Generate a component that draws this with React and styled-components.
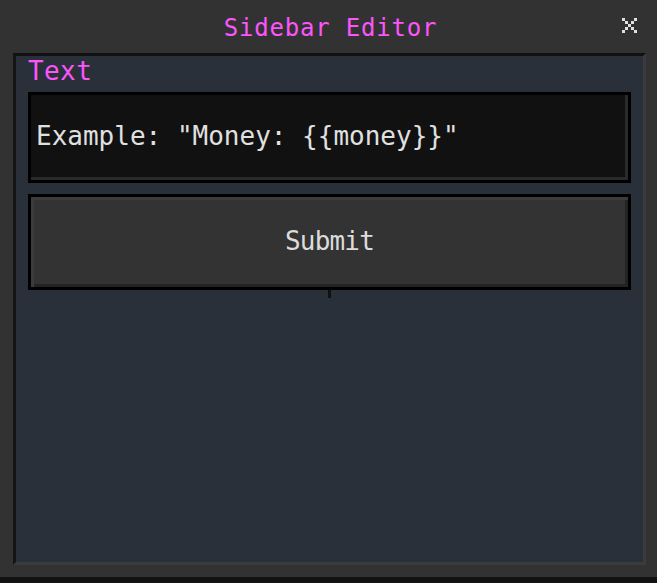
import React from 'react'
import styled, { createGlobalStyle } from 'styled-components'

const GlobalStyle = createGlobalStyle`
  html, body {
    margin: 0;
    padding: 0;
    background: #323232;
  }
`;

const Window = styled.div`
  width: 657px;
  height: 583px;
  display: flex;
  flex-direction: column;
  background: #323232;
  font-family: "DejaVu Sans Mono", "Liberation Mono", monospace;
  box-sizing: border-box;
  overflow: hidden;
`;

const TitleBar = styled.div`
  position: relative;
  height: 53px;
  display: flex;
  align-items: center;
  justify-content: center;
  flex-shrink: 0;
`;

const Title = styled.span`
  color: #fb55fb;
  font-size: 24px;
  letter-spacing: 0.8px;
  padding-left: 4px;
  margin-top: 2px;
`;

const CloseButton = styled.button`
  position: absolute;
  right: 18px;
  top: 15px;
  width: 20px;
  height: 20px;
  padding: 0;
  border: none;
  background: transparent;
  display: flex;
  align-items: center;
  justify-content: center;
  cursor: pointer;
`;

const Panel = styled.div`
  margin: 0 11px 0 13px;
  height: 512px;
  box-sizing: border-box;
  background: #29303a;
  border-top: 3px solid #111111;
  border-left: 3px solid #141414;
  border-right: 3px solid #3b3b3b;
  border-bottom: 3px solid #3b3b3b;
  padding: 0 12px;
  display: flex;
  flex-direction: column;
`;

const Label = styled.label`
  color: #fb55fb;
  font-size: 26px;
  line-height: 31px;
  height: 36px;
  letter-spacing: 0.4px;
`;

const TextInput = styled.input`
  height: 91px;
  box-sizing: border-box;
  border: 3px solid #000;
  background: #111111;
  box-shadow: inset -3px -3px 0 #2a2a2a;
  color: #e0e0e0;
  font-family: inherit;
  font-size: 26px;
  padding: 0 0 4px 5px;
  outline: none;
  &::placeholder {
    color: #e0e0e0;
    opacity: 1;
  }
`;

const SubmitButton = styled.button`
  margin-top: 11px;
  height: 96px;
  box-sizing: border-box;
  border: 3px solid #000;
  background: #333333;
  box-shadow: inset 3px 3px 0 #3c3c3c, inset -3px -3px 0 #232323;
  color: #dcdcdc;
  font-family: inherit;
  font-size: 26px;
  letter-spacing: -0.8px;
  padding: 0 0 2px 0;
  cursor: pointer;
`;

const Tick = styled.div`
  align-self: center;
  width: 3px;
  height: 8px;
  background: #111;
  margin-left: -1px;
`;

const BottomStrip = styled.div`
  margin-top: auto;
  height: 6px;
  background: #121212;
`;

const CloseIcon = () => (
  <svg width="15" height="15" viewBox="0 0 15 15" shapeRendering="crispEdges">
    <g fill="#e0e0e0">
      <rect x="0" y="0" width="3" height="3" />
      <rect x="12" y="0" width="3" height="3" />
      <rect x="3" y="3" width="3" height="3" />
      <rect x="9" y="3" width="3" height="3" />
      <rect x="6" y="6" width="3" height="3" />
      <rect x="3" y="9" width="3" height="3" />
      <rect x="9" y="9" width="3" height="3" />
      <rect x="0" y="12" width="3" height="3" />
      <rect x="12" y="12" width="3" height="3" />
    </g>
  </svg>
);

const App = () => {
  return (
    <>
      <GlobalStyle />
      <Window>
        <TitleBar>
          <Title>Sidebar Editor</Title>
          <CloseButton aria-label="Close">
            <CloseIcon />
          </CloseButton>
        </TitleBar>
        <Panel>
          <Label htmlFor="sidebar-text">Text</Label>
          <TextInput id="sidebar-text" placeholder={'Example: "Money: {{money}}"'} />
          <SubmitButton>Submit</SubmitButton>
          <Tick />
        </Panel>
        <BottomStrip />
      </Window>
    </>
  );
};

export default App
